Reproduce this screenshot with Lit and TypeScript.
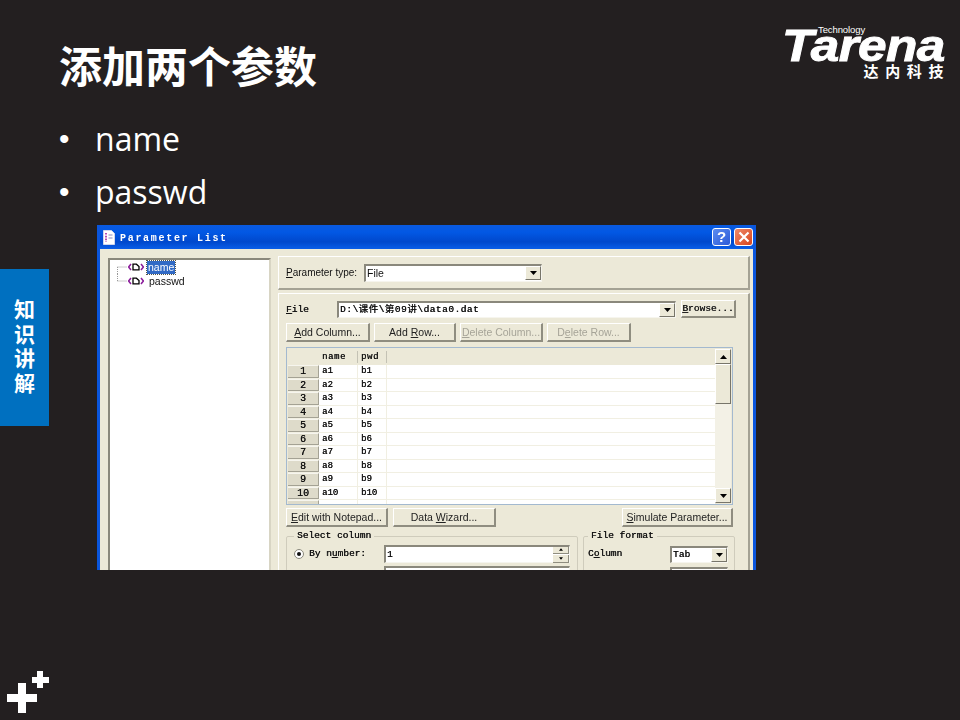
import { LitElement, html, css, svg } from 'lit';
import { customElement } from 'lit/decorators.js';

const ROWS = [1, 2, 3, 4, 5, 6, 7, 8, 9, 10];

const upArrow = html`<svg width="7" height="4" viewBox="0 0 7 4"><path d="M3.5 0 7 4H0z" fill="#000" /></svg>`;
const downArrow = html`<svg width="7" height="4" viewBox="0 0 7 4"><path d="M0 0h7L3.5 4z" fill="#000" /></svg>`;

const paramIcon = svg`
  <path d="M3 1 .6 4 3 7M13 1l2.4 3L13 7" fill="none" stroke="#8a1a9a" stroke-width="1.5" />
  <path d="M5 1.2h3.4L11 3.6v3.2H5z" fill="#fff" stroke="#000" stroke-width="1.3" />`;

@customElement('app-root')
export class AppRoot extends LitElement {
  static styles = css`
    :host {
      display: block;
    }

    .slide {
      width: 960px;
      height: 720px;
      background: #231f20;
      color: #fff;
      display: flex;
      flex-direction: column;
      overflow: hidden;
    }

    .header {
      height: 112px;
      flex: none;
      display: flex;
      justify-content: space-between;
      padding-left: 59px;
      padding-right: 16px;
      box-sizing: border-box;
    }

    .title {
      margin: 0;
      padding-top: 32px;
      font: 700 43px/64px 'Noto Sans CJK SC', sans-serif;
      height: 64px;
    }

    .logo {
      width: 162px;
      padding-top: 25px;
      display: flex;
      flex-direction: column;
      align-items: flex-end;
      color: #fff;
    }

    .logo-tech {
      font: 400 9.5px/10px 'Liberation Sans', sans-serif;
      align-self: flex-start;
      margin-left: 36px;
      height: 4px;
      letter-spacing: -0.1px;
    }

    .logo-name {
      font: italic 700 48px/38px 'Liberation Sans', sans-serif;
      letter-spacing: -0.6px;
      -webkit-text-stroke: 1px #fff;
      align-self: flex-start;
      transform: scaleX(1.07) scaleY(0.92);
      transform-origin: left top;
      white-space: nowrap;
      height: 34px;
    }

    .logo-cn {
      font: 700 15px/16px 'Noto Sans CJK SC', sans-serif;
      letter-spacing: 6.6px;
      margin-right: -6px;
    }

    .bullets {
      list-style: none;
      margin: 0;
      padding: 0 0 0 59px;
      flex: none;
    }

    .bullets li {
      display: flex;
      height: 53px;
      align-items: center;
      font: 400 32px/53px 'Open Sans', sans-serif;
    }

    .bullets .dot {
      width: 36px;
      flex: none;
      font: 400 30px/53px 'Liberation Sans', sans-serif;
    }

    .content {
      display: flex;
      align-items: flex-start;
      margin-top: 7px;
      flex: none;
    }

    .side-tab {
      width: 49px;
      height: 157px;
      margin-top: 44px;
      background: #0070c0;
      display: flex;
      align-items: center;
      justify-content: center;
      flex: none;
    }

    .side-tab span {
      writing-mode: vertical-rl;
      text-orientation: upright;
      font: 700 21px/24px 'Noto Sans CJK SC', sans-serif;
      letter-spacing: 3.5px;
    }

    .plus {
      margin-top: auto;
      margin-left: 7px;
      margin-bottom: 7px;
      display: block;
      flex: none;
    }

    .window {
      margin-left: 48px;
      width: 659px;
      height: 345px;
      box-sizing: border-box;
      overflow: hidden;
      flex: none;
      background: #ece9d8;
      border-left: 3px solid #0a55dc;
      border-right: 3px solid #0a55dc;
      color: #111;
      font: 400 10.5px/14px 'Liberation Sans', sans-serif;
      filter: blur(0.4px);
    }

    .titlebar {
      height: 24px;
      margin: 0 -3px;
      padding: 0 3px 0 6px;
      display: flex;
      align-items: center;
      background: linear-gradient(180deg, #0a5ae0 0%, #0258e4 30%, #0048cc 70%, #0a5ee8 100%);
      color: #fff;
      border-radius: 3px 3px 0 0;
    }

    .titlebar .caption {
      font: 700 10px/14px 'Liberation Mono', monospace;
      letter-spacing: 1.7px;
      padding-top: 3px;
    }

    .titlebar svg.doc {
      margin-right: 5px;
      flex: none;
    }

    .titlebar .spacer {
      flex: 1;
    }

    .cap {
      width: 19px;
      height: 18px;
      border: 1px solid #fff;
      border-radius: 3px;
      box-sizing: border-box;
      display: flex;
      align-items: center;
      justify-content: center;
      margin-left: 3px;
    }

    .cap.help {
      background: linear-gradient(135deg, #5c8cf0, #2a5ad8);
      font: 700 15px/16px 'Liberation Sans', sans-serif;
    }

    .cap.close {
      background: linear-gradient(135deg, #ee8a6a, #d8431c);
    }

    .main {
      display: flex;
      align-items: flex-start;
      padding-left: 8px;
      gap: 7px;
    }

    .tree {
      width: 163px;
      height: 320px;
      margin-top: 9px;
      box-sizing: border-box;
      flex: none;
      background: #fff;
      border-top: 2px solid #8a887c;
      border-left: 2px solid #8a887c;
      border-right: 2px solid #d8d5c4;
    }

    .node {
      display: flex;
      align-items: center;
      height: 14px;
      padding-left: 7px;
    }

    .node .line {
      width: 11px;
      height: 14px;
      flex: none;
    }

    .node .icon {
      flex: none;
      margin-right: 3px;
    }

    .node span {
      padding: 0 1px;
      font-size: 10.5px;
      line-height: 13px;
      margin-left: 1px;
    }

    .node span.selected {
      background: #316ac5;
      color: #fff;
      outline: 1px dotted #554;
      margin-left: 0;
    }

    .right {
      width: 472px;
      flex: none;
      margin-top: 7px;
      display: flex;
      flex-direction: column;
      gap: 3px;
    }

    .panel {
      border-top: 1px solid #fff;
      border-left: 1px solid #fff;
      border-right: 2px solid #a4a294;
      border-bottom: 2px solid #a4a294;
      box-sizing: border-box;
    }

    .param {
      height: 34px;
      display: flex;
      align-items: center;
      padding-left: 7px;
    }

    .param .label {
      width: 78px;
      flex: none;
      font-size: 10px;
    }

    .field {
      background: #fff;
      border-top: 2px solid #8a887c;
      border-left: 2px solid #8a887c;
      border-bottom: 1px solid #f6f5ee;
      border-right: 1px solid #f6f5ee;
      box-sizing: border-box;
      display: flex;
      align-items: center;
      justify-content: space-between;
      padding-left: 1px;
      flex: none;
    }

    .drop {
      width: 16px;
      height: 14px;
      flex: none;
      background: #ece9d8;
      box-sizing: border-box;
      border-top: 1px solid #fff;
      border-left: 1px solid #fff;
      border-right: 1px solid #77756a;
      border-bottom: 1px solid #77756a;
      display: flex;
      align-items: center;
      justify-content: center;
    }

    .param .field {
      width: 178px;
      height: 18px;
    }

    .file {
      padding: 6px 0 0 7px;
      height: 300px;
    }

    .mono {
      font: 400 9.5px/12px 'Liberation Mono', monospace;
      text-shadow: 0.3px 0 0 #111;
    }

    .file-row {
      display: flex;
      align-items: center;
      height: 18px;
    }

    .file-row .label {
      width: 51px;
      flex: none;
      padding-top: 2px;
    }

    .file-row .field {
      width: 339px;
      height: 17px;
      margin-right: 5px;
    }

    .file-row .field .path {
      font-family: 'Liberation Mono', 'Noto Sans CJK SC', monospace;
      letter-spacing: 0.5px;
    }

    .btn {
      height: 19px;
      box-sizing: border-box;
      padding: 0;
      background: #ece9d8;
      color: #222;
      border-top: 1px solid #fff;
      border-left: 1px solid #fff;
      border-right: 2px solid #8f8d80;
      border-bottom: 2px solid #8f8d80;
      text-align: center;
      line-height: 16px;
      flex: none;
      white-space: nowrap;
    }

    .btn.off {
      color: #a6a498;
    }

    .btn.mono {
      line-height: 15px;
    }

    .btn-browse {
      width: 55px;
      height: 18px;
    }

    .btn-row {
      display: flex;
      height: 19px;
      margin-top: 5px;
      gap: 4px;
    }

    .w84 {
      width: 84px;
    }

    .w82 {
      width: 82px;
    }

    .w83 {
      width: 83px;
    }

    .w102 {
      width: 102px;
    }

    .w103 {
      width: 103px;
    }

    .w111 {
      width: 111px;
      margin-left: 121px;
    }

    .grid {
      width: 447px;
      height: 158px;
      margin-top: 5px;
      box-sizing: border-box;
      border: 1px solid #a3b9cf;
      padding: 1px;
      display: flex;
      font: 400 9px/13px 'Liberation Mono', monospace;
      text-shadow: 0.3px 0 0 #111;
      overflow: hidden;
    }

    .cells {
      flex: 1;
      min-width: 0;
    }

    .row {
      display: flex;
      height: 13.5px;
      background: #fff;
      border-bottom: 1px solid #f1efe2;
      box-sizing: border-box;
    }

    .row.head {
      height: 16px;
      background: #ece9d8;
      border-bottom: none;
      letter-spacing: 0.6px;
      align-items: center;
    }

    .row div {
      flex: none;
      box-sizing: border-box;
      padding-left: 3px;
    }

    .row .num {
      width: 31px;
      padding: 0;
      text-align: center;
      background: #dedbca;
      border-top: 1px solid #f6f5ee;
      border-right: 1px solid #a4a294;
      border-bottom: 1px solid #a4a294;
      font: 400 10px/11px 'Liberation Mono', monospace;
    }

    .row .c1 {
      width: 39px;
      border-right: 1px solid #f1efe2;
    }

    .row .c2 {
      width: 29px;
      border-right: 1px solid #f1efe2;
    }

    .row.head .num {
      background: #ece9d8;
      border: none;
    }

    .row.head .c1,
    .row.head .c2 {
      height: 12px;
      line-height: 12px;
      border-right: 1px solid #c4c2b4;
    }

    .scroll {
      width: 16px;
      flex: none;
      background: #f3f1e6;
      display: flex;
      flex-direction: column;
    }

    .scroll .drop {
      height: 15px;
      width: 16px;
    }

    .scroll .thumb {
      height: 40px;
      box-sizing: border-box;
      background: #ece9d8;
      border-top: 1px solid #fff;
      border-left: 1px solid #fff;
      border-right: 1px solid #77756a;
      border-bottom: 1px solid #77756a;
      flex: none;
    }

    .scroll .track {
      flex: 1;
    }

    .btn-row.low {
      margin-top: 3px;
      gap: 5px;
    }

    .groups {
      display: flex;
      gap: 5px;
      margin-top: 3px;
    }

    fieldset {
      margin: 0;
      padding: 3px 0 0 7px;
      height: 60px;
      box-sizing: border-box;
      border: 1px solid #cfccbc;
      border-radius: 2px;
      flex: none;
    }

    legend {
      padding: 0 3px;
      margin-left: 0;
    }

    .g1 {
      width: 292px;
    }

    .g2 {
      width: 152px;
      padding-left: 4px;
    }

    .opt {
      display: flex;
      align-items: center;
      height: 18px;
      margin-bottom: 3px;
    }

    .radio {
      width: 10px;
      height: 10px;
      box-sizing: border-box;
      border-radius: 50%;
      background: #fff;
      border: 1px solid #8a887c;
      display: flex;
      align-items: center;
      justify-content: center;
      margin: 0 5px 0 0;
      flex: none;
    }

    .radio i {
      width: 4px;
      height: 4px;
      border-radius: 50%;
      background: #111;
    }

    .opt .by {
      width: 75px;
      flex: none;
    }

    .g1 .field {
      width: 186px;
      height: 18px;
    }

    .spin {
      width: 16px;
      height: 16px;
      flex: none;
      display: flex;
      flex-direction: column;
      gap: 1px;
      background: #fff;
    }

    .spin b {
      flex: 1;
      background: #ece9d8;
      display: flex;
      align-items: center;
      justify-content: center;
      border-right: 1px solid #8f8d80;
      border-bottom: 1px solid #8f8d80;
    }

    .spin svg {
      width: 4px;
      height: 3px;
    }

    .g2 .by {
      width: 82px;
      flex: none;
    }

    .g2 .field {
      width: 58px;
      height: 17px;
    }
  `;

  renderGrid() {
    return html`
      <div class="grid">
        <div class="cells">
          <div class="row head">
            <div class="num"></div>
            <div class="c1">name</div>
            <div class="c2">pwd</div>
          </div>
          ${ROWS.map(
            n => html`
              <div class="row">
                <div class="num">${n}</div>
                <div class="c1">a${n}</div>
                <div class="c2">b${n}</div>
              </div>
            `,
          )}
          <div class="row">
            <div class="num"></div>
            <div class="c1"></div>
            <div class="c2"></div>
          </div>
        </div>
        <div class="scroll">
          <div class="drop">${upArrow}</div>
          <div class="thumb"></div>
          <div class="track"></div>
          <div class="drop">${downArrow}</div>
        </div>
      </div>
    `;
  }

  renderWindow() {
    return html`
      <div class="window">
        <div class="titlebar">
          <svg class="doc" width="12" height="15" viewBox="0 0 12 15">
            <path d="M.5.5h8l3 3v11H.5z" fill="#fff" stroke="#cfd6ee" />
            <path d="M3 3v9" stroke="#a020a0" stroke-width="1.6" stroke-dasharray="1.6 1.2" />
            <path d="M5.5 5h4M5.5 8h4" stroke="#8a8ac0" />
          </svg>
          <span class="caption">Parameter List</span>
          <span class="spacer"></span>
          <div class="cap help">?</div>
          <div class="cap close">
            <svg width="12" height="12" viewBox="0 0 12 12">
              <path d="M1.5 1.5l9 9M10.5 1.5l-9 9" stroke="#fff" stroke-width="2.2" />
            </svg>
          </div>
        </div>
        <div class="main">
          <div class="tree">
            <div class="node">
              <svg class="line" viewBox="0 0 11 14">
                <path d="M.5 7h10M.5 7v7" stroke="#999" stroke-dasharray="1 1" fill="none" />
              </svg>
              <svg class="icon" width="16" height="8" viewBox="0 0 16 8">${paramIcon}</svg>
              <span class="selected">name</span>
            </div>
            <div class="node">
              <svg class="line" viewBox="0 0 11 14">
                <path d="M.5 7h10M.5 0v7" stroke="#999" stroke-dasharray="1 1" fill="none" />
              </svg>
              <svg class="icon" width="16" height="8" viewBox="0 0 16 8">${paramIcon}</svg>
              <span>passwd</span>
            </div>
          </div>
          <div class="right">
            <div class="panel param">
              <div class="label"><u>P</u>arameter type:</div>
              <div class="field">File<div class="drop">${downArrow}</div></div>
            </div>
            <div class="panel file">
              <div class="file-row">
                <div class="label mono"><u>F</u>ile</div>
                <div class="field mono">
                  <span class="path">D:\\课件\\第09讲\\data0.dat</span>
                  <div class="drop">${downArrow}</div>
                </div>
                <div class="btn btn-browse mono"><u>B</u>rowse...</div>
              </div>
              <div class="btn-row">
                <div class="btn w84"><u>A</u>dd Column...</div>
                <div class="btn w82">Add <u>R</u>ow...</div>
                <div class="btn off w83"><u>D</u>elete Column...</div>
                <div class="btn off w84">D<u>e</u>lete Row...</div>
              </div>
              ${this.renderGrid()}
              <div class="btn-row low">
                <div class="btn w102"><u>E</u>dit with Notepad...</div>
                <div class="btn w103">Data <u>W</u>izard...</div>
                <div class="btn w111"><u>S</u>imulate Parameter...</div>
              </div>
              <div class="groups">
                <fieldset class="g1 mono">
                  <legend>Select column</legend>
                  <div class="opt">
                    <div class="radio"><i></i></div>
                    <div class="by">By n<u>u</u>mber:</div>
                    <div class="field">
                      1
                      <div class="spin">
                        <b><svg viewBox="0 0 7 4"><path d="M3.5 0 7 4H0z" /></svg></b>
                        <b><svg viewBox="0 0 7 4"><path d="M0 0h7L3.5 4z" /></svg></b>
                      </div>
                    </div>
                  </div>
                  <div class="opt">
                    <div class="radio"></div>
                    <div class="by"></div>
                    <div class="field"></div>
                  </div>
                </fieldset>
                <fieldset class="g2 mono">
                  <legend>File format</legend>
                  <div class="opt">
                    <div class="by">C<u>o</u>lumn</div>
                    <div class="field">Tab<div class="drop">${downArrow}</div></div>
                  </div>
                  <div class="opt">
                    <div class="by"></div>
                    <div class="field"></div>
                  </div>
                </fieldset>
              </div>
            </div>
          </div>
        </div>
      </div>
    `;
  }

  render() {
    return html`
      <div class="slide">
        <div class="header">
          <h1 class="title">添加两个参数</h1>
          <div class="logo">
            <div class="logo-tech">Technology</div>
            <div class="logo-name">Tarena</div>
            <div class="logo-cn">达内科技</div>
          </div>
        </div>
        <ul class="bullets">
          <li><span class="dot">•</span>name</li>
          <li><span class="dot">•</span>passwd</li>
        </ul>
        <div class="content">
          <div class="side-tab"><span>知识讲解</span></div>
          ${this.renderWindow()}
        </div>
        <svg class="plus" width="43" height="43" viewBox="0 0 43 43">
          <path d="M11 13h8v11h11v8H19v11h-8V32H0v-8h11z" fill="#fff" />
          <path d="M30 1h6v6h6v6h-6v5h-6v-5h-5V7h5z" fill="#fff" />
        </svg>
      </div>
    `;
  }
}
